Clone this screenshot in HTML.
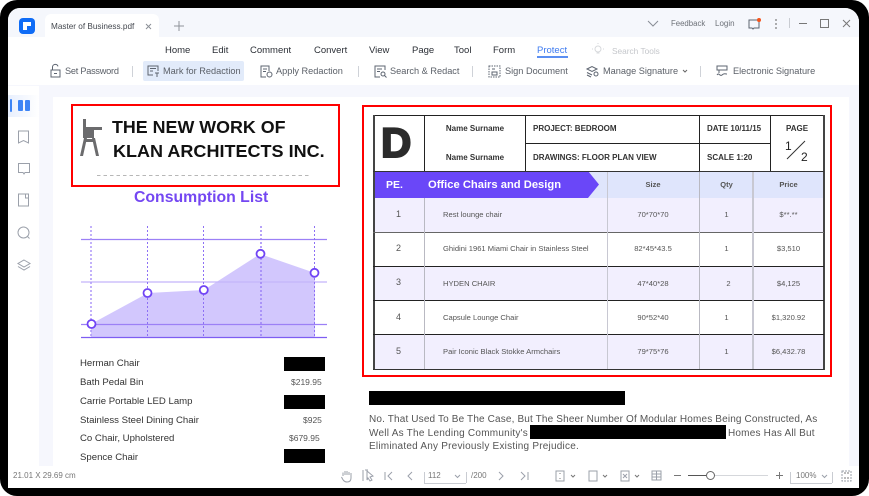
<!DOCTYPE html>
<html><head><meta charset="utf-8"><style>
html,body{margin:0;padding:0;background:#fff}
#r{position:relative;width:869px;height:496px;overflow:hidden;background:#fff;font-family:"Liberation Sans",sans-serif;filter:blur(.3px)}
.a,.t{position:absolute}
.t{white-space:nowrap;line-height:1;transform-origin:0 50%}
.k{background:#000;position:absolute}
svg{position:absolute;overflow:visible}
.m{font-size:9.500px;color:#2b2f36;top:46px}
.s{font-size:9.200px;color:#5b6068;top:67px}
.c{text-align:center}
.v{position:absolute;background:#b9b9c2}
.h{position:absolute;background:#333;left:373px;width:451px}
.d{font-size:7.600px;color:#555}
.n{font-size:8px;color:#333;font-weight:bold}
.l{font-size:9.600px;color:#333}
.p{font-size:8.500px;color:#555}
.ic{fill:none;stroke:#5d6470;stroke-width:1}
.g{fill:none;stroke:#9ba0aa;stroke-width:1}
.b{font-size:10px;color:#555}
</style></head><body><div id="r">
<div class="a" style="left:0;top:0;width:869px;height:496px;background:#000;border-radius:17px"></div>
<div class="a" style="left:8px;top:8px;width:851px;height:480px;background:#fff;border-radius:12px 14px 0 0;overflow:hidden">
 <div class="a" style="left:0;top:0;width:851px;height:29px;background:#f5f7fc"></div>
 <div class="a" style="left:37px;top:6px;width:114px;height:23px;background:#fff;border-radius:6px 6px 0 0"></div>
 <div class="a" style="left:0;top:77px;width:851px;height:381px;background:#f6f7fd"></div>
 <div class="a" style="left:0;top:78px;width:31px;height:380px;background:#fff"></div>
 <div class="a" style="left:0;top:87px;width:31px;height:22px;background:linear-gradient(90deg,#e8effd,#fff)"></div>
 <div class="a" style="left:45px;top:89px;width:796px;height:369px;background:#fff"></div>
</div>
<!-- title bar -->
<div class="a" style="left:19px;top:18px;width:16px;height:16px;background:#0f6cf6;border-radius:4px"></div>
<svg style="left:19px;top:18px" width="16" height="16"><path d="M4 4h8v4H8v4H4z" fill="#fff"/></svg>
<div class="t" style="left:51px;top:23px;font-size:8.200px;color:#44484f">Master of Business.pdf</div>
<svg style="left:145px;top:23px" width="10" height="10"><path d="M1 1l5 5M6 1l-5 5" stroke="#8b8f96" fill="none"/></svg>
<svg style="left:173px;top:20px" width="12" height="12"><path d="M6 1v10M1 6h10" stroke="#8f939a" fill="none"/></svg>
<svg style="left:647px;top:20px" width="12" height="8"><path d="M1 1l5 5 5-5" stroke="#888d95" fill="none"/></svg>
<div class="t" style="left:671px;top:20px;font-size:7.800px;color:#6d7178">Feedback</div>
<div class="t" style="left:715px;top:20px;font-size:8px;color:#6d7178">Login</div>
<svg style="left:747px;top:17px" width="16" height="14"><path d="M2 3h10v8H7l-1 1-1-1H2z" class="ic"/><circle cx="12" cy="3" r="2" fill="#f4541c"/></svg>
<svg style="left:774px;top:18px" width="4" height="12"><circle cx="2" cy="2" r=".9" fill="#777"/><circle cx="2" cy="6" r=".9" fill="#777"/><circle cx="2" cy="10" r=".9" fill="#777"/></svg>
<div class="a" style="left:789px;top:18px;width:1px;height:10px;background:#c9ccd2"></div>
<div class="a" style="left:799px;top:23px;width:8px;height:1px;background:#777"></div>
<div class="a" style="left:820px;top:19px;width:7px;height:7px;border:1px solid #777"></div>
<svg style="left:842px;top:19px" width="10" height="10"><path d="M1 1l7 7M8 1l-7 7" stroke="#777" fill="none"/></svg>
<!-- menu -->
<div class="t m" style="left:165px">Home</div>
<div class="t m" style="left:212px">Edit</div>
<div class="t m" style="left:250px">Comment</div>
<div class="t m" style="left:314px">Convert</div>
<div class="t m" style="left:369px">View</div>
<div class="t m" style="left:412px">Page</div>
<div class="t m" style="left:454px">Tool</div>
<div class="t m" style="left:493px">Form</div>
<div class="t m" style="left:537px;color:#3f7cf0">Protect</div>
<div class="a" style="left:537px;top:56px;width:31px;height:1.500px;background:#5b8ff2"></div>
<svg style="left:591px;top:43px" width="14" height="14"><circle cx="7" cy="6" r="3" fill="none" stroke="#d7d9dc"/><path d="M5.500 10h3M7 0v1M1 6h1M12 6h1" stroke="#d7d9dc" fill="none"/></svg>
<div class="t" style="left:612px;top:47px;font-size:8.300px;color:#c5c7cb">Search Tools</div>
<!-- toolbar -->
<div class="a" style="left:143px;top:61px;width:101px;height:20px;background:#e2ebfa;border-radius:2px"></div>
<svg style="left:49px;top:63px" width="13" height="16"><path d="M2 7h9v7H2zM3.500 7V4a2.800 2.800 0 0 1 5.500-.6M5 10.500h3" class="ic"/></svg>
<div class="t s" style="left:65px;letter-spacing:-.25px">Set Password</div>
<div class="a" style="left:132px;top:66px;width:1px;height:11px;background:#cfd2d8"></div>
<svg style="left:147px;top:64px" width="13" height="14"><path d="M1 9V2h10v5M3 4.500h6M3 7h3M1 9v2h5M8 9h4M10 9v4" class="ic"/></svg>
<div class="t s" style="left:163px">Mark for Redaction</div>
<svg style="left:260px;top:65px" width="13" height="13"><path d="M9 6V1H1v11h5M3 4h4M3 6.500h3" class="ic"/><circle cx="9.500" cy="9.500" r="2.500" class="ic"/></svg>
<div class="t s" style="left:276px">Apply Redaction</div>
<div class="a" style="left:358px;top:66px;width:1px;height:11px;background:#cfd2d8"></div>
<svg style="left:374px;top:65px" width="13" height="13"><path d="M11 5V1H1v11h5M3 4h5M3 6.500h3" class="ic"/><circle cx="9" cy="9" r="2" class="ic"/><path d="M10.500 10.500l2 2" class="ic"/></svg>
<div class="t s" style="left:390px">Search &amp; Redact</div>
<div class="a" style="left:472px;top:66px;width:1px;height:11px;background:#cfd2d8"></div>
<svg style="left:488px;top:65px" width="13" height="13"><rect x="1" y="1" width="11" height="11" class="ic" stroke-dasharray="1.500 1"/><path d="M4 7h5v3H4zM4 4h3" class="ic"/></svg>
<div class="t s" style="left:505px">Sign Document</div>
<svg style="left:586px;top:65px" width="13" height="13"><path d="M1 4l5-2.500L11 4 6 6.500zM1 7.500l5 2.500M1 10l4 2" class="ic"/><circle cx="10" cy="9" r="2" class="ic"/></svg>
<div class="t s" style="left:603px">Manage Signature</div>
<svg style="left:682px;top:69px" width="6" height="5"><path d="M1 1l2 2 2-2" stroke="#666" fill="none"/></svg>
<div class="a" style="left:700px;top:66px;width:1px;height:11px;background:#cfd2d8"></div>
<svg style="left:716px;top:65px" width="13" height="13"><path d="M1 1h10v4H1zM3 5v3M1 10c2-3 3 2 5 0s3-1 5-1" class="ic"/></svg>
<div class="t s" style="left:733px">Electronic Signature</div>
<!-- sidebar -->
<div class="a" style="left:10px;top:99px;width:2px;height:13px;background:#3d84f5;border-radius:1px"></div>
<div class="a" style="left:17.500px;top:100px;width:5.500px;height:11px;background:#3d84f5;border-radius:1px"></div>
<div class="a" style="left:24.500px;top:100px;width:5.500px;height:11px;background:#3d84f5;border-radius:1px"></div>
<svg style="left:17px;top:130px" width="13" height="14"><path d="M1.500 1h10v12L6.500 10.500 1.500 13z" class="g"/></svg>
<svg style="left:17px;top:162px" width="14" height="14"><path d="M1.500 1.500h11v9H8l-1 1.500-1-1.500H1.500z" class="g"/></svg>
<svg style="left:17px;top:193px" width="13" height="14"><path d="M1.500 1h10v12h-10zM8.500 1v4h3" class="g"/></svg>
<svg style="left:17px;top:226px" width="14" height="14"><circle cx="6.500" cy="6.500" r="5.500" class="g"/><path d="M10.500 10.500l2 2" class="g"/></svg>
<svg style="left:17px;top:259px" width="14" height="14"><path d="M7 1l6 3.500L7 8 1 4.500zM1 7.500L7 11l6-3.500" class="g"/></svg>
<!-- left page -->
<div class="a" style="left:71px;top:104px;width:269px;height:83px;border:2px solid #f00;box-sizing:border-box"></div>
<svg style="left:79px;top:119px" width="24" height="38"><path d="M4 0h3v8h16v3h-8v8H4z" fill="#6b6b6d"/><path d="M5 19h3l-4 18H1zM13 19h3l4 18h-3zM6 20h9v3H6z" fill="#6b6b6d"/></svg>
<div class="t" style="left:112px;top:119px;font-size:17.500px;font-weight:bold;color:#111;transform:scaleX(1.02)">THE NEW WORK OF</div>
<div class="t" style="left:113px;top:143px;font-size:17.500px;font-weight:bold;color:#111;transform:scaleX(1.03)">KLAN ARCHITECTS INC.</div>
<svg style="left:97px;top:175px" width="213" height="1"><path d="M0 .5H213" stroke="#b7b7b7" stroke-dasharray="3.500 3" fill="none"/></svg>
<div class="t" style="left:134px;top:190px;font-size:15.800px;font-weight:bold;color:#7447f2">Consumption List</div>
<svg style="left:60px;top:210px" width="290" height="140">
<polygon points="31,114 88,83 144,80 200,44 255,63 255,127 31,127" fill="#d2c7fd"/>
<g stroke="#9c80f6" stroke-width="1.200"><path d="M21 29.500H267"/><path d="M21 72H267" stroke="#c4b5fa"/><path d="M21 114.500H267"/><path d="M21 127.500H267" stroke="#7e5df2"/></g>
<g stroke="#8d70f5" stroke-dasharray="2 2" fill="none"><path d="M31 16V127" stroke="#ad97f8" stroke-width="1.500"/><path d="M87.500 16V127"/><path d="M143.500 16V127"/><path d="M201 16V127" stroke="#9d84f6" stroke-width="1.500"/><path d="M254.500 16V127"/></g>
<g fill="#fff" stroke="#7044f5" stroke-width="1.800"><circle cx="31.500" cy="114" r="4"/><circle cx="87.500" cy="83" r="4"/><circle cx="143.800" cy="80" r="4"/><circle cx="200.500" cy="43.800" r="4"/><circle cx="254.500" cy="62.800" r="4"/></g>
</svg>
<div class="t l" style="left:80px;top:359px">Herman Chair</div>
<div class="t l" style="left:80px;top:378px">Bath Pedal Bin</div>
<div class="t l" style="left:80px;top:397px">Carrie Portable LED Lamp</div>
<div class="t l" style="left:80px;top:416px">Stainless Steel Dining Chair</div>
<div class="t l" style="left:80px;top:434px">Co Chair, Upholstered</div>
<div class="t l" style="left:80px;top:453px">Spence Chair</div>
<div class="k" style="left:284px;top:357px;width:41px;height:14px"></div>
<div class="t p" style="left:291px;top:378px">$219.95</div>
<div class="k" style="left:284px;top:395px;width:41px;height:14px"></div>
<div class="t p" style="left:303px;top:416px">$925</div>
<div class="t p" style="left:289px;top:434px">$679.95</div>
<div class="k" style="left:284px;top:449px;width:41px;height:14px"></div>
<!-- right table -->
<div class="a" style="left:362px;top:105px;width:470px;height:272px;border:2px solid #f00;box-sizing:border-box"></div>
<div class="a" style="left:373px;top:171px;width:451px;height:27px;background:#dfe5fc"></div>
<div class="a" style="left:373px;top:198px;width:451px;height:34px;background:#f2effe"></div>
<div class="a" style="left:373px;top:266px;width:451px;height:34px;background:#f2effe"></div>
<div class="a" style="left:373px;top:334px;width:451px;height:35px;background:#f2effe"></div>
<svg style="left:373px;top:171px" width="226" height="27"><path d="M0 0H215L226 13.500 215 27H0z" fill="#6a47f8"/></svg>
<div class="a" style="left:372.500px;top:115px;width:452px;height:255px;border:1px solid #222;box-sizing:border-box"></div>
<div class="a" style="left:373px;top:115px;width:1.500px;height:255px;background:#444"></div>
<div class="a" style="left:823px;top:115px;width:1.500px;height:255px;background:#444"></div>
<div class="a" style="left:424px;top:115px;width:1px;height:56px;background:#222"></div>
<div class="a" style="left:525px;top:115px;width:1px;height:56px;background:#222"></div>
<div class="a" style="left:699px;top:115px;width:1px;height:56px;background:#222"></div>
<div class="a" style="left:770px;top:115px;width:1px;height:56px;background:#222"></div>
<div class="a" style="left:525px;top:143px;width:245px;height:1px;background:#222"></div>
<div class="h" style="top:171px;height:1px"></div>
<div class="h" style="top:231.500px;height:1.500px;background:#666"></div>
<div class="h" style="top:265.500px;height:1px;background:#222"></div>
<div class="h" style="top:300px;height:1px;background:#222"></div>
<div class="h" style="top:334px;height:1px;background:#222"></div>
<div class="h" style="top:368.500px;height:1.500px"></div>
<div class="v" style="left:424px;top:198px;width:1px;height:171px"></div>
<div class="v" style="left:606.500px;top:172px;width:1.500px;height:197px;background:#c8c8d2"></div>
<div class="v" style="left:699px;top:172px;width:1px;height:197px"></div>
<div class="v" style="left:752px;top:172px;width:1.500px;height:197px;background:#c8c8d2"></div>
<div class="t" style="left:381px;top:122px;font-size:42px;font-weight:bold;color:#2b2b2b;-webkit-text-stroke:2px #2b2b2b">D</div>
<div class="t n c" style="left:425px;top:125px;width:100px">Name Surname</div>
<div class="t n c" style="left:425px;top:154px;width:100px">Name Surname</div>
<div class="t n" style="left:533px;top:125px">PROJECT: BEDROOM</div>
<div class="t n" style="left:533px;top:154px">DRAWINGS: FLOOR PLAN VIEW</div>
<div class="t n" style="left:707px;top:125px">DATE 10/11/15</div>
<div class="t n" style="left:707px;top:154px">SCALE 1:20</div>
<div class="t n c" style="left:771px;top:125px;width:52px">PAGE</div>
<div class="t" style="left:785px;top:140px;font-size:12px;color:#222">1</div>
<div class="t" style="left:801px;top:151px;font-size:12px;color:#222">2</div>
<svg style="left:785px;top:139px" width="22" height="22"><path d="M2 20L20 2" stroke="#333" fill="none"/></svg>
<div class="t" style="left:386px;top:180px;font-size:10.500px;font-weight:bold;color:#fff">PE.</div>
<div class="t" style="left:428px;top:180px;font-size:11.200px;font-weight:bold;color:#fff">Office Chairs and Design</div>
<div class="t n c" style="left:607px;top:181px;width:92px;font-size:7.500px;color:#555">Size</div>
<div class="t n c" style="left:700px;top:181px;width:53px;font-size:7.500px;color:#555">Qty</div>
<div class="t n c" style="left:753px;top:181px;width:71px;font-size:7.500px;color:#555">Price</div>
<div class="t c" style="left:373px;top:210px;width:51px;font-size:9px;color:#555">1</div>
<div class="t c" style="left:373px;top:244px;width:51px;font-size:9px;color:#555">2</div>
<div class="t c" style="left:373px;top:278px;width:51px;font-size:9px;color:#555">3</div>
<div class="t c" style="left:373px;top:313px;width:51px;font-size:9px;color:#555">4</div>
<div class="t c" style="left:373px;top:347px;width:51px;font-size:9px;color:#555">5</div>
<div class="t d" style="left:443px;top:210.500px">Rest lounge chair</div>
<div class="t d" style="left:443px;top:245px">Ghidini 1961 Miami Chair in Stainless Steel</div>
<div class="t d" style="left:443px;top:279.500px">HYDEN CHAIR</div>
<div class="t d" style="left:443px;top:314px">Capsule Lounge Chair</div>
<div class="t d" style="left:443px;top:348px">Pair Iconic Black Stokke Armchairs</div>
<div class="t d c" style="left:607px;top:210.500px;width:92px">70*70*70</div>
<div class="t d c" style="left:607px;top:245px;width:92px">82*45*43.5</div>
<div class="t d c" style="left:607px;top:279.500px;width:92px">47*40*28</div>
<div class="t d c" style="left:607px;top:314px;width:92px">90*52*40</div>
<div class="t d c" style="left:607px;top:348px;width:92px">79*75*76</div>
<div class="t d c" style="left:700px;top:210.500px;width:53px">1</div>
<div class="t d c" style="left:700px;top:245px;width:53px">1</div>
<div class="t d c" style="left:702px;top:279.500px;width:53px">2</div>
<div class="t d c" style="left:700px;top:314px;width:53px">1</div>
<div class="t d c" style="left:700px;top:348px;width:53px">1</div>
<div class="t d c" style="left:753px;top:210.500px;width:71px">$**.**</div>
<div class="t d c" style="left:753px;top:245px;width:71px">$3,510</div>
<div class="t d c" style="left:753px;top:279.500px;width:71px">$4,125</div>
<div class="t d c" style="left:753px;top:314px;width:71px">$1,320.92</div>
<div class="t d c" style="left:753px;top:348px;width:71px">$6,432.78</div>
<!-- paragraph -->
<div class="k" style="left:369px;top:391px;width:256px;height:14px"></div>
<div class="t b" style="left:369px;top:414.500px;letter-spacing:.15px">No. That Used To Be The Case, But The Sheer Number Of Modular Homes Being Constructed, As</div>
<div class="t b" style="left:369px;top:428.500px;letter-spacing:.24px">Well As The Lending Community's</div>
<div class="k" style="left:530px;top:425px;width:196px;height:14px"></div>
<div class="t b" style="left:728px;top:428.500px;letter-spacing:.2px">Homes Has All But</div>
<div class="t b" style="left:369px;top:442px;letter-spacing:.22px">Eliminated Any Previously Existing Prejudice.</div>
<!-- status bar -->
<div class="t" style="left:13px;top:472px;font-size:8px;color:#777">21.01 X 29.69 cm</div>
<svg style="left:340px;top:469px" width="13" height="14"><path d="M3 7V3.500M5 6V2M7 6V2M9 6V3M11 7V4v5c0 2-1 4-4 4S3 11 1.500 8" class="g" stroke="#777"/></svg>
<svg style="left:362px;top:469px" width="14" height="13"><path d="M1 1v11M3 1h3M5 2l6 5-3 1 2 3-2 1-2-3-1 2z" class="g"/></svg>
<svg style="left:384px;top:471px" width="10" height="10"><path d="M1 1v8M8 1L4 5l4 4" class="g"/></svg>
<svg style="left:406px;top:471px" width="8" height="10"><path d="M6 1L2 5l4 4" class="g"/></svg>
<div class="a" style="left:424px;top:472px;width:1px;height:11px;background:#c9ccd2"></div>
<div class="a" style="left:424px;top:483px;width:42px;height:1px;background:#c9ccd2"></div>
<div class="a" style="left:466px;top:472px;width:1px;height:11px;background:#c9ccd2"></div>
<div class="t" style="left:428px;top:472px;font-size:8px;color:#777">112</div>
<svg style="left:454px;top:474px" width="7" height="5"><path d="M1 1l2.500 2.500L6 1" class="g"/></svg>
<div class="t" style="left:471px;top:472px;font-size:8px;color:#777">/200</div>
<svg style="left:497px;top:471px" width="8" height="10"><path d="M2 1l4 4-4 4" class="g"/></svg>
<svg style="left:519px;top:471px" width="10" height="10"><path d="M2 1l4 4-4 4M9 1v8" class="g"/></svg>
<svg style="left:555px;top:470px" width="14" height="12"><path d="M1 1h8v10H1z" class="g"/><path d="M5 3v1M5 8v1" stroke="#777"/></svg>
<svg style="left:570px;top:474px" width="7" height="5"><path d="M1 1l2 2 2-2" stroke="#777" fill="none"/></svg>
<svg style="left:588px;top:470px" width="10" height="12"><path d="M1 1h8v10H1z" class="g"/></svg>
<svg style="left:602px;top:474px" width="7" height="5"><path d="M1 1l2 2 2-2" stroke="#777" fill="none"/></svg>
<svg style="left:620px;top:470px" width="10" height="12"><path d="M1 1h8v10H1zM3 4l4 4M7 4l-4 4" class="g"/></svg>
<svg style="left:634px;top:474px" width="7" height="5"><path d="M1 1l2 2 2-2" stroke="#777" fill="none"/></svg>
<svg style="left:651px;top:470px" width="12" height="12"><path d="M1 1h9v9H1zM1 4h9M1 7h9M5.500 1v9" class="g"/></svg>
<div class="a" style="left:674px;top:475px;width:7px;height:1px;background:#777"></div>
<div class="a" style="left:688px;top:475px;width:18px;height:1px;background:#555"></div>
<div class="a" style="left:714px;top:475px;width:54px;height:1px;background:#d5d7db"></div>
<div class="a" style="left:706px;top:471px;width:7px;height:7px;border:1px solid #666;border-radius:50%;background:#fff"></div>
<svg style="left:775px;top:471px" width="9" height="9"><path d="M4.500 1v7M1 4.500h7" stroke="#777" fill="none"/></svg>
<div class="a" style="left:790px;top:472px;width:1px;height:11px;background:#c9ccd2"></div>
<div class="a" style="left:790px;top:483px;width:42px;height:1px;background:#c9ccd2"></div>
<div class="a" style="left:832px;top:472px;width:1px;height:11px;background:#c9ccd2"></div>
<div class="t" style="left:796px;top:472px;font-size:8px;color:#777">100%</div>
<svg style="left:821px;top:474px" width="7" height="5"><path d="M1 1l2.500 2.500L6 1" class="g"/></svg>
<svg style="left:841px;top:470px" width="11" height="12"><path d="M1 1h9v10H1z" class="g" stroke-dasharray="2 1"/><path d="M3 3h2M6 3h2M3 8h2M6 8h2" stroke="#777"/></svg>
</div></body></html>
